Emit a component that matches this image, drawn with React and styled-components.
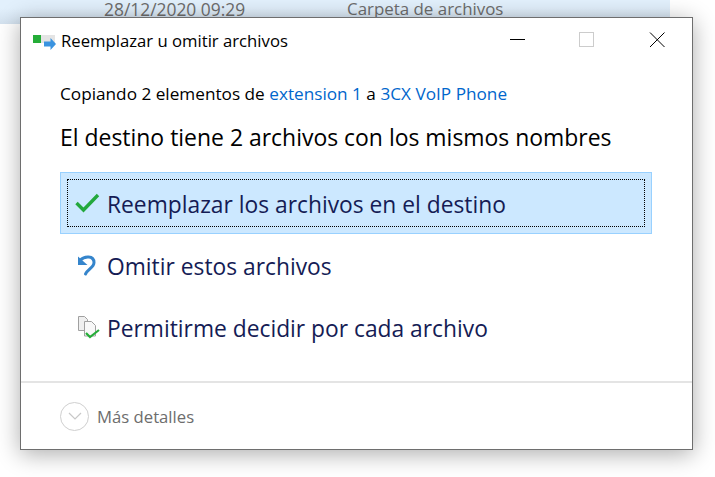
import React from 'react'
import styled, { createGlobalStyle } from 'styled-components'

const GlobalStyle = createGlobalStyle`
  html, body {
    margin: 0;
    padding: 0;
    background: #fff;
    overflow: hidden;
  }
  body {
    font-family: "Open Sans", "Noto Sans", "Liberation Sans", sans-serif;
  }
`

const Page = styled.div`
  position: relative;
  width: 715px;
  height: 477px;
  overflow: hidden;
`

const ExplorerRow = styled.div`
  width: 670px;
  height: 24px;
  display: flex;
  background: linear-gradient(#e2f0fc 0, #e2f0fc 8px, #d3e1ee 24px);
  color: #6d6d6d;
  line-height: 18px;
`

const Cell = styled.span`
  box-sizing: border-box;
  width: ${props => props.width}px;
  padding-left: ${props => props.indent || 0}px;
  white-space: nowrap;
  font-size: ${props => props.size}px;
`

const Dialog = styled.div`
  position: absolute;
  left: 20px;
  top: 17px;
  width: 671px;
  height: 431px;
  display: flex;
  flex-direction: column;
  background: #fff;
  border: 1px solid #6e6e6e;
  box-shadow: 0 4px 22px rgba(0, 0, 0, 0.33);
`

const TitleBar = styled.div`
  height: 46px;
  display: flex;
  align-items: center;
  padding-left: 12px;
  color: #000;
`

const TitleText = styled.div`
  flex: 1;
  margin: -2px 0 0 5px;
  font-size: 16.7px;
`

const WindowButton = styled.div`
  width: ${props => props.width}px;
  height: 44px;
  align-self: flex-start;
  display: flex;
  align-items: center;
  justify-content: center;
`

const Content = styled.div`
  flex: 1;
  padding: 18px 40px 0 39px;
`

const CopyLine = styled.div`
  font-size: 17.2px;
  line-height: 24px;
  color: #000;
`

const Link = styled.span`
  color: #0066cc;
`

const Heading = styled.div`
  margin-top: 17px;
  font-size: 22.95px;
  line-height: 28px;
  color: #000;
`

const Options = styled.div`
  margin-top: 21px;
  display: flex;
  flex-direction: column;
`

const Option = styled.div`
  height: 62px;
  box-sizing: border-box;
  padding: 6px;
  background: ${props => props.selected ? '#cce8ff' : 'transparent'};
  border: 1px solid ${props => props.selected ? '#99d1ff' : 'transparent'};
`

const OptionInner = styled.div`
  height: 100%;
  box-sizing: border-box;
  display: flex;
  align-items: center;
  padding-left: 7px;
  gap: 8px;
  border: 1px dotted ${props => props.selected ? '#000' : 'transparent'};
  color: #151c55;
  font-size: 22.8px;
`

const OptionLabel = styled.span`
  margin-top: 2px;
`

const IconSlot = styled.div`
  width: 24px;
  height: 24px;
  flex: none;

  svg {
    display: block;
    overflow: visible;
  }
`

const Footer = styled.div`
  height: 66px;
  display: flex;
  align-items: center;
  gap: 8px;
  padding-left: 39px;
  border-top: 2px solid #e4e4e4;
  color: #6d6d6d;
  font-size: 16.7px;
`

const DetailsButton = styled.div`
  width: 29px;
  height: 29px;
  box-sizing: border-box;
  display: flex;
  align-items: center;
  justify-content: center;
  border: 1px solid #cfcfcf;
  border-radius: 50%;
`

const CopyIcon = () => (
  <svg width="23" height="22" viewBox="0 0 23 22">
    <rect x="0" y="5" width="22" height="8" fill="#e4e4e4" />
    <rect x="0" y="5" width="8" height="8" fill="#25ad38" />
    <path d="M11 11.500h6.500V8l5.500 6-5.500 6v-3.500H11z" fill="#3a93e0" />
  </svg>
)

const CheckIcon = () => (
  <svg width="24" height="24" viewBox="0 0 24 24">
    <path d="M1.500 12l7 7L23 4" fill="none" stroke="#23a83d" strokeWidth="3.400" />
  </svg>
)

const UndoIcon = () => (
  <svg width="24" height="24" viewBox="0 0 24 24">
    <path d="M5.500 7C9 3 19 2 19 9.500 19 14.500 13 16 10.500 21" fill="none" stroke="#3585cc" strokeWidth="3" strokeLinecap="round" />
    <path d="M3 3.500V12h9.500z" fill="#3585cc" />
  </svg>
)

const FilesIcon = () => (
  <svg width="24" height="24" viewBox="0 0 24 24">
    <path d="M3.500 1.500h6l3 3v11h-9z" fill="#efefef" stroke="#a0a0a0" />
    <path d="M9.500 6.500h7l4 4v10.500h-11z" fill="#f8f8f8" stroke="#a0a0a0" />
    <path d="M11 18l4 4 9-7" fill="none" stroke="#25ad38" strokeWidth="2.200" />
  </svg>
)

export default function App() {
  return (
    <Page>
      <GlobalStyle />
      <ExplorerRow>
        <Cell width={347} indent={104} size={17.4}>28/12/2020 09:29</Cell>
        <Cell width={200} size={16.9}>Carpeta de archivos</Cell>
      </ExplorerRow>
      <Dialog>
        <TitleBar>
          <CopyIcon />
          <TitleText>Reemplazar u omitir archivos</TitleText>
          <WindowButton width={68}>
            <svg width="16" height="16" viewBox="0 0 16 16"><path d="M0 7.500h15" stroke="#000" /></svg>
          </WindowButton>
          <WindowButton width={70}>
            <svg width="16" height="16" viewBox="0 0 16 16"><rect x="0.500" y="0.500" width="14" height="14" fill="none" stroke="#cccccc" /></svg>
          </WindowButton>
          <WindowButton width={70}>
            <svg width="16" height="16" viewBox="0 0 16 16"><path d="M1 0.500l14.500 14.500M15.500 0.500L1 15" stroke="#000" /></svg>
          </WindowButton>
        </TitleBar>
        <Content>
          <CopyLine>Copiando 2 elementos de <Link>extension 1</Link> a <Link>3CX VoIP Phone</Link></CopyLine>
          <Heading>El destino tiene 2 archivos con los mismos nombres</Heading>
          <Options>
            <Option selected>
              <OptionInner selected>
                <IconSlot><CheckIcon /></IconSlot>
                <OptionLabel>Reemplazar los archivos en el destino</OptionLabel>
              </OptionInner>
            </Option>
            <Option>
              <OptionInner>
                <IconSlot><UndoIcon /></IconSlot>
                <OptionLabel>Omitir estos archivos</OptionLabel>
              </OptionInner>
            </Option>
            <Option>
              <OptionInner>
                <IconSlot><FilesIcon /></IconSlot>
                <OptionLabel>Permitirme decidir por cada archivo</OptionLabel>
              </OptionInner>
            </Option>
          </Options>
        </Content>
        <Footer>
          <DetailsButton>
            <svg width="14" height="10" viewBox="0 0 14 10"><path d="M1 2l6 6 6-6" fill="none" stroke="#c8c8c8" strokeWidth="1.200" /></svg>
          </DetailsButton>
          Más detalles
        </Footer>
      </Dialog>
    </Page>
  )
}
